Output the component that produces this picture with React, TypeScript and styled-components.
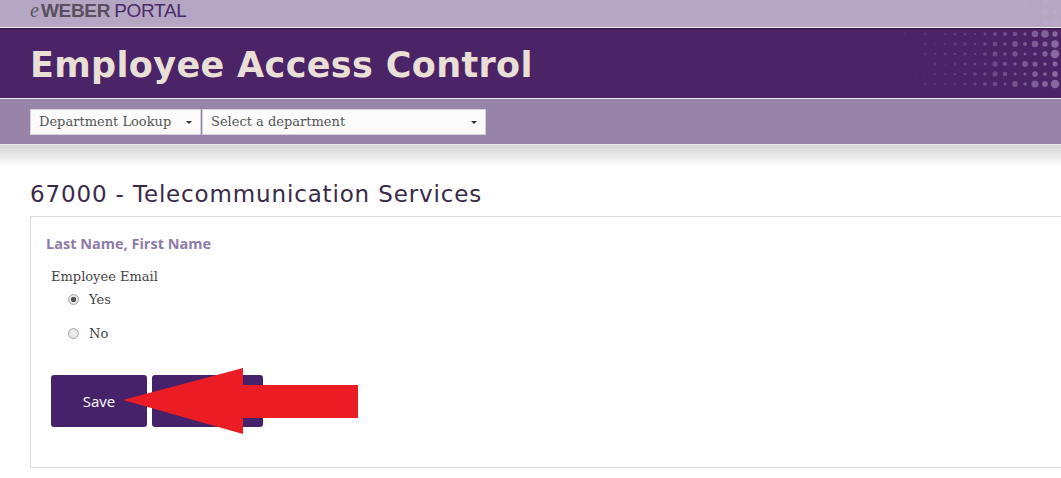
import React from "react";
import styled, { createGlobalStyle } from "styled-components";

const Global = createGlobalStyle`
  html, body { margin: 0; padding: 0; background: #fff; }
  body { width: 1061px; height: 478px; overflow: hidden; font-family: "Liberation Serif", serif; }
`;

const Page = styled.div`
  width: 1061px;
  height: 478px;
  position: relative;
  overflow: hidden;
  background: #fff;
`;

const TopBar = styled.div`
  height: 27px;
  background: #b5a7c3;
  border-bottom: 1px solid #f4f0f6;
  display: flex;
  align-items: flex-start;
  padding-left: 30px;
  position: relative;
  overflow: hidden;
`;

const Brand = styled.div`
  display: flex;
  align-items: baseline;
  font-size: 19px;
  line-height: 19px;
  margin-top: 1px;
  position: relative;
  z-index: 1;
`;

const BrandE = styled.span`
  font-family: "Liberation Serif", serif;
  font-style: italic;
  color: #5d5360;
  font-size: 20px;
  margin-right: 2px;
`;

const BrandWeber = styled.span`
  font-family: "Liberation Sans", sans-serif;
  font-weight: 700;
  color: #5a4f5e;
  letter-spacing: -0.3px;
`;

const BrandPortal = styled.span`
  font-family: "Liberation Sans", sans-serif;
  color: #4b2a6a;
  margin-left: 4px;
  letter-spacing: -0.3px;
`;

const Header = styled.div`
  height: 69px;
  background: #4a2466;
  border-top: 1px solid #2e1342;
  border-bottom: 1px solid #f1ecf3;
  display: flex;
  align-items: center;
  padding-left: 30px;
  position: relative;
  overflow: hidden;
`;

const Title = styled.h1`
  margin: 0;
  font-family: "DejaVu Sans", sans-serif;
  font-weight: 700;
  font-size: 35px;
  letter-spacing: 0.35px;
  color: #e9dfd6;
  position: relative;
  z-index: 1;
  margin-top: 3px;
`;

const Dots = styled.svg`
  position: absolute;
  right: 0;
  top: 0;
`;

const ToolBar = styled.div`
  height: 45px;
  background: #9884a9;
  border-bottom: 1px solid #ebe7ee;
  display: flex;
  align-items: center;
  padding-left: 30px;
`;

const Select = styled.div<{ $w: number }>`
  width: ${(p) => p.$w}px;
  height: 26px;
  box-sizing: border-box;
  background: #fbfbfb;
  border: 1px solid #d6d0da;
  display: flex;
  align-items: center;
  justify-content: space-between;
  padding: 0 8px 0 8px;
  font-family: "DejaVu Serif", serif;
  font-size: 13px;
  color: #555;
  & + & { margin-left: 1px; }
`;

const Caret = styled.span`
  width: 0;
  height: 0;
  border-left: 3px solid transparent;
  border-right: 3px solid transparent;
  border-top: 3px solid #333;
  margin-top: 2px;
`;

const Shade = styled.div`
  height: 22px;
  background: linear-gradient(#d4d4d4, #ffffff);
`;

const Content = styled.div`
  padding: 13px 0 0 30px;
`;

const Heading = styled.h2`
  margin: 0 0 8px 0;
  font-family: "DejaVu Sans", sans-serif;
  font-weight: 400;
  font-size: 23px;
  line-height: 28px;
  letter-spacing: 0.85px;
  color: #3a2a48;
`;

const Card = styled.div`
  border: 1px solid #dcdcdc;
  border-right: none;
  height: 252px;
  box-sizing: border-box;
  padding: 17px 0 0 15px;
`;

const Name = styled.div`
  font-family: "Open Sans", sans-serif;
  font-weight: 700;
  font-size: 14.5px;
  color: #8f7ba7;
  margin-bottom: 16px;
`;

const FieldLabel = styled.div`
  font-family: "DejaVu Serif", serif;
  font-size: 13px;
  color: #444;
  margin-left: 5px;
  margin-bottom: 7px;
`;

const RadioRow = styled.label`
  display: flex;
  align-items: center;
  margin-left: 22px;
  height: 17px;
  margin-bottom: 17px;
  font-family: "DejaVu Serif", serif;
  font-size: 13px;
  color: #444;
`;

const RadioDot = styled.span<{ $checked?: boolean }>`
  width: 11px;
  height: 11px;
  box-sizing: border-box;
  border-radius: 50%;
  border: 1px solid #a9a9a9;
  background: radial-gradient(circle, ${(p) => (p.$checked ? "#555 0 2.5px, #e6e6e6 3px" : "#f2f2f2 0, #dcdcdc 100%")});
  margin-right: 10px;
`;

const Buttons = styled.div`
  display: flex;
  gap: 5px;
  margin-left: 5px;
  margin-top: 33px;
  position: relative;
`;

const Button = styled.button<{ $w: number }>`
  width: ${(p) => p.$w}px;
  height: 52px;
  background: #46226a;
  border: none;
  border-radius: 3px;
  color: #fff;
  font-family: "Open Sans", sans-serif;
  font-size: 15px;
  padding: 0;
`;

const Arrow = styled.svg`
  position: absolute;
  left: 72px;
  top: -7px;
`;

function DotPattern({ w, h, cols, rows, ox, oy, step, baseAlpha }: { w: number; h: number; cols: number; rows: number; ox: number; oy: number; step: number; baseAlpha: number }) {
  const dots: React.ReactNode[] = [];
  for (let r = 0; r < rows; r++) {
    for (let c = 0; c < cols; c++) {
      const t = c / (cols - 1);
      const seed = Math.sin((r + 1) * 12.9898 + (c + 1) * 78.233) * 43758.5453;
      const rnd = seed - Math.floor(seed);
      const rad = (0.5 + t * t * 3.2) * (0.5 + rnd * 0.7);
      const a = baseAlpha * (0.1 + t * t * 0.9);
      dots.push(<circle key={`${r}-${c}`} cx={ox + c * step} cy={oy + r * step} r={rad} fill="#c4acd8" opacity={a} />);
    }
  }
  return (
    <Dots width={w} height={h} viewBox={`0 0 ${w} ${h}`}>
      {dots}
    </Dots>
  );
}

export default function App() {
  return (
    <Page>
      <Global />
      <TopBar>
        <Brand>
          <BrandE>e</BrandE>
          <BrandWeber>WEBER</BrandWeber>
          <BrandPortal>PORTAL</BrandPortal>
        </Brand>
        <DotPattern w={110} h={27} cols={11} rows={3} ox={4} oy={2} step={10} baseAlpha={0.35} />
      </TopBar>
      <Header>
        <Title>Employee Access Control</Title>
        <DotPattern w={230} h={69} cols={23} rows={6} ox={4} oy={5} step={10} baseAlpha={0.5} />
      </Header>
      <ToolBar>
        <Select $w={171}>
          Department Lookup <Caret />
        </Select>
        <Select $w={284}>
          Select a department <Caret />
        </Select>
      </ToolBar>
      <Shade />
      <Content>
        <Heading>67000 - Telecommunication Services</Heading>
        <Card>
          <Name>Last Name, First Name</Name>
          <FieldLabel>Employee Email</FieldLabel>
          <RadioRow>
            <RadioDot $checked />
            Yes
          </RadioRow>
          <RadioRow>
            <RadioDot />
            No
          </RadioRow>
          <Buttons>
            <Button $w={96}>Save</Button>
            <Button $w={111}>Cancel</Button>
            <Arrow width={240} height={70} viewBox="0 0 240 70">
              <polygon points="0,32 120,0 120,17 235,17 235,50 120,50 120,66" fill="#ec1c24" />
            </Arrow>
          </Buttons>
        </Card>
      </Content>
    </Page>
  );
}
